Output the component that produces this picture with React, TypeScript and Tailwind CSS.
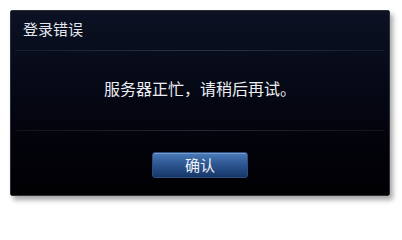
export default function App() {
  return (
    <div className="w-[402px] h-[208px] bg-white pt-[10px] pl-[10px]" style={{ fontFamily: '"Noto Sans CJK SC", "Noto Sans", sans-serif' }}>
      <div className="w-[380px] h-[186px] flex flex-col border border-[#2c2f36] rounded-[2px] bg-gradient-to-b from-[#0c1224] to-[#010104] shadow-[3px_4px_5px_rgba(0,0,0,0.35)]">
        {/* Header */}
        <div className="h-[39px] flex items-center pl-[12px] pb-[5px]">
          <span className="text-[15px] leading-none text-[#e6e8ee]">登录错误</span>
        </div>
        <div className="mx-[4px] h-px bg-gradient-to-r from-[#1a1e2a] via-[#2e3340] to-[#1a1e2a]" />

        {/* Body */}
        <div className="h-[79px] flex items-center justify-center pb-[5px]">
          <span className="text-[16px] leading-none text-[#eceef2]">服务器正忙，请稍后再试。</span>
        </div>
        <div className="mx-[4px] h-px bg-gradient-to-r from-[#141414] via-[#2a2a2e] to-[#141414]" />

        {/* Footer */}
        <div className="flex-1 flex justify-center pt-[21px]">
          <button className="w-[96px] h-[26px] rounded-[3px] border border-[#2c4f80] bg-gradient-to-b from-[#4a7cba] via-[#2b5490] to-[#173767] text-[15px] leading-none text-[#f0f2f6] flex items-center justify-center pb-[1px] shadow-[inset_0_1px_0_rgba(255,255,255,0.25)]">
            确认
          </button>
        </div>
      </div>
    </div>
  );
}
